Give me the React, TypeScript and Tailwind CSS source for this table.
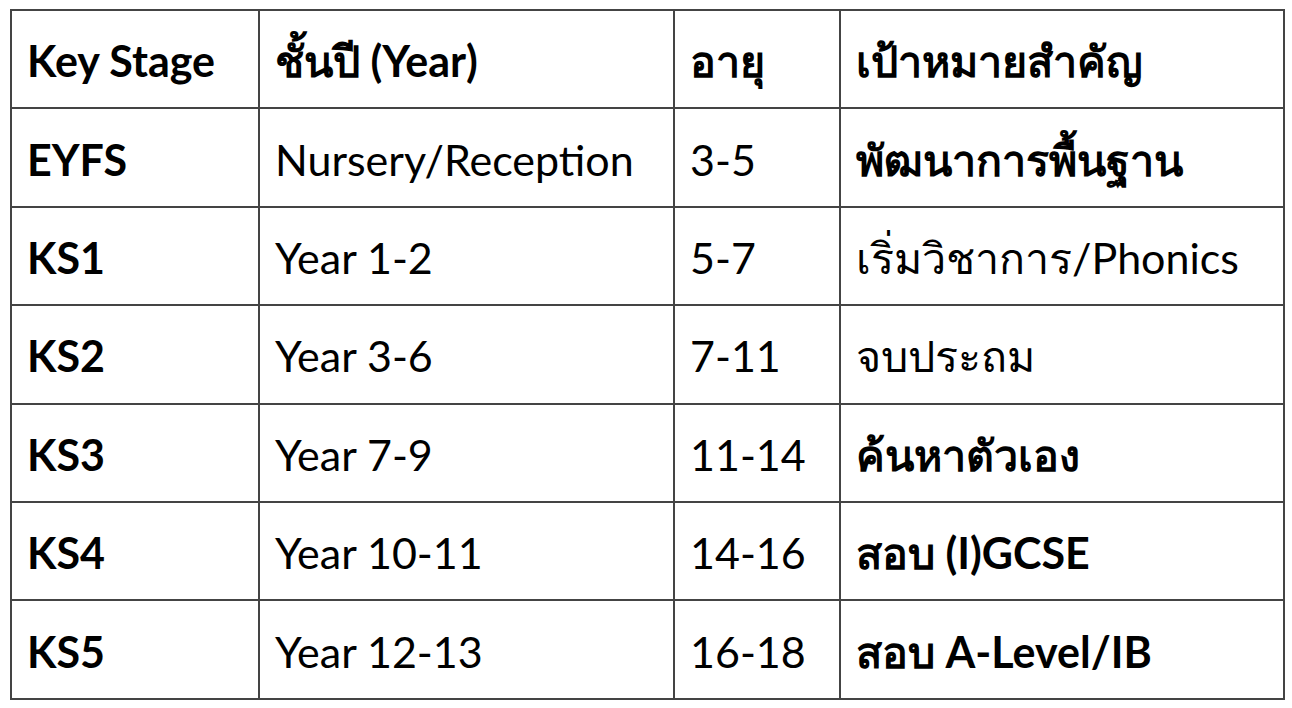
import React from "react";

type Row = { ks: string; year: string; age: string; goal: string; goalBold: boolean };

const rows: Row[] = [
  { ks: "EYFS", year: "Nursery/Reception", age: "3-5", goal: "พัฒนาการพื้นฐาน", goalBold: true },
  { ks: "KS1", year: "Year 1-2", age: "5-7", goal: "เริ่มวิชาการ/Phonics", goalBold: false },
  { ks: "KS2", year: "Year 3-6", age: "7-11", goal: "จบประถม", goalBold: false },
  { ks: "KS3", year: "Year 7-9", age: "11-14", goal: "ค้นหาตัวเอง", goalBold: true },
  { ks: "KS4", year: "Year 10-11", age: "14-16", goal: "สอบ (I)GCSE", goalBold: true },
  { ks: "KS5", year: "Year 12-13", age: "16-18", goal: "สอบ A-Level/IB", goalBold: true },
];

const cell = "border-2 border-[#444444] pl-[15px] pr-0 pt-[3px] align-middle text-left whitespace-nowrap";

export default function App() {
  return (
    <div className="w-[1292px] h-[708px] bg-white pt-[9px] pl-[10px] font-['Lato','Noto_Sans',sans-serif] text-black text-[43px] leading-none">
      <table className="border-collapse table-fixed w-[1273px]">
        <colgroup>
          <col className="w-[248px]" />
          <col className="w-[415px]" />
          <col className="w-[166px]" />
          <col className="w-[444px]" />
        </colgroup>
        <thead>
          <tr className="h-[98.4px]">
            <th className={`${cell} font-bold`}>Key Stage</th>
            <th className={`${cell} font-bold`}>ชั้นปี (Year)</th>
            <th className={`${cell} font-bold`}>อายุ</th>
            <th className={`${cell} font-bold`}>เป้าหมายสำคัญ</th>
          </tr>
        </thead>
        <tbody>
          {rows.map((r) => (
            <tr key={r.ks} className="h-[98.4px]">
              <td className={`${cell} font-bold`}>{r.ks}</td>
              <td className={`${cell} font-normal`}>{r.year}</td>
              <td className={`${cell} font-normal`}>{r.age}</td>
              <td className={`${cell} ${r.goalBold ? "font-bold" : "font-normal"}`}>{r.goal}</td>
            </tr>
          ))}
        </tbody>
      </table>
    </div>
  );
}
